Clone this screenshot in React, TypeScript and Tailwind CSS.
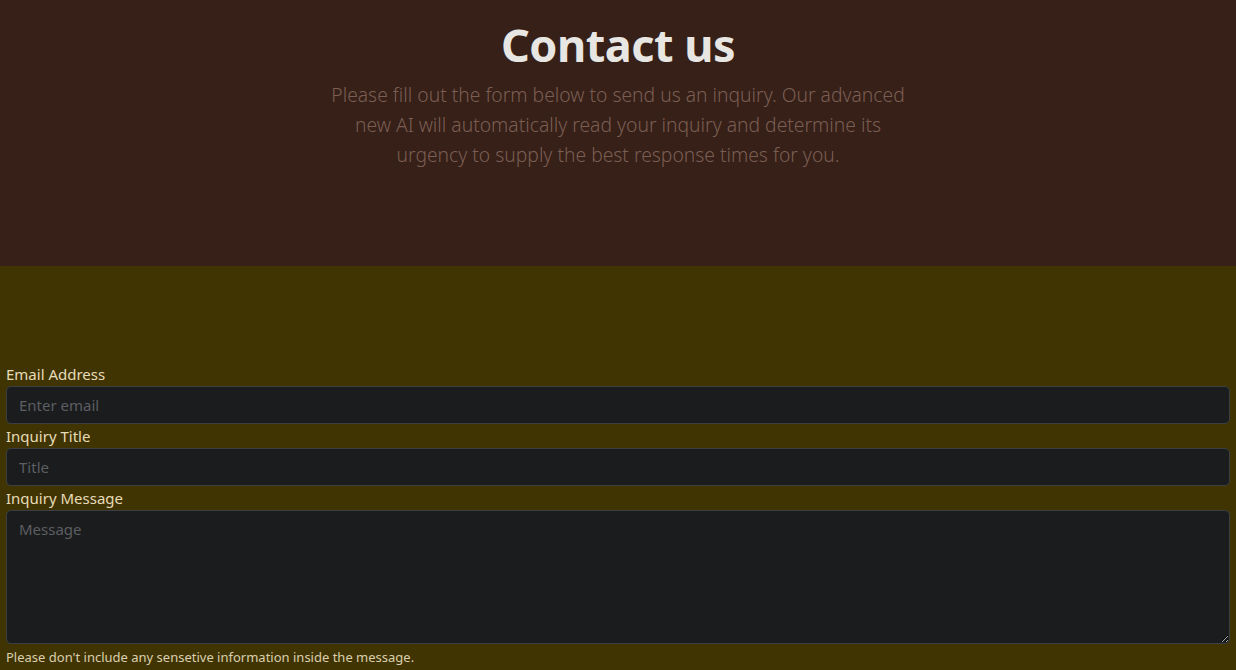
export default function App() {
  return (
    <div className="min-h-screen bg-[#413403]" style={{ fontFamily: '"Noto Sans", "Open Sans", sans-serif' }}>
      <header className="h-[266px] bg-[#362018] flex flex-col items-center pt-[14px]">
        <h1 className="text-[45px] leading-[62px] font-bold text-[#e8e6e3] tracking-[-0.5px]">Contact us</h1>
        <p className="mt-[4px] max-w-[600px] text-center text-[19.3px] leading-[30px] font-light text-[#7b5e53]">
          Please fill out the form below to send us an inquiry. Our advanced new AI will automatically read your inquiry and determine its urgency to supply the best response times for you.
        </p>
      </header>
      <form className="px-[6px] pt-[96px] flex flex-col">
        <label className="text-[15px] leading-[24px] text-[#e6dcb8]">Email Address</label>
        <input
          type="email"
          placeholder="Enter email"
          className="h-[38px] rounded-[5px] border border-[#3b3e42] bg-[#1b1c1e] px-3 text-[15px] text-[#ccc] placeholder:text-[#5b5e62] outline-none"
        />
        <label className="text-[15px] leading-[24px] text-[#e6dcb8]">Inquiry Title</label>
        <input
          type="text"
          placeholder="Title"
          className="h-[38px] rounded-[5px] border border-[#3b3e42] bg-[#1b1c1e] px-3 text-[15px] text-[#ccc] placeholder:text-[#5b5e62] outline-none"
        />
        <label className="text-[15px] leading-[24px] text-[#e6dcb8]">Inquiry Message</label>
        <textarea
          placeholder="Message"
          className="h-[134px] rounded-[5px] border border-[#3b3e42] bg-[#1b1c1e] px-3 py-[7px] text-[15px] text-[#ccc] placeholder:text-[#5b5e62] outline-none"
        />
        <p className="mt-[3px] text-[13px] leading-[20px] text-[#d9cfae]">Please don't include any sensetive information inside the message.</p>
      </form>
    </div>
  );
}
